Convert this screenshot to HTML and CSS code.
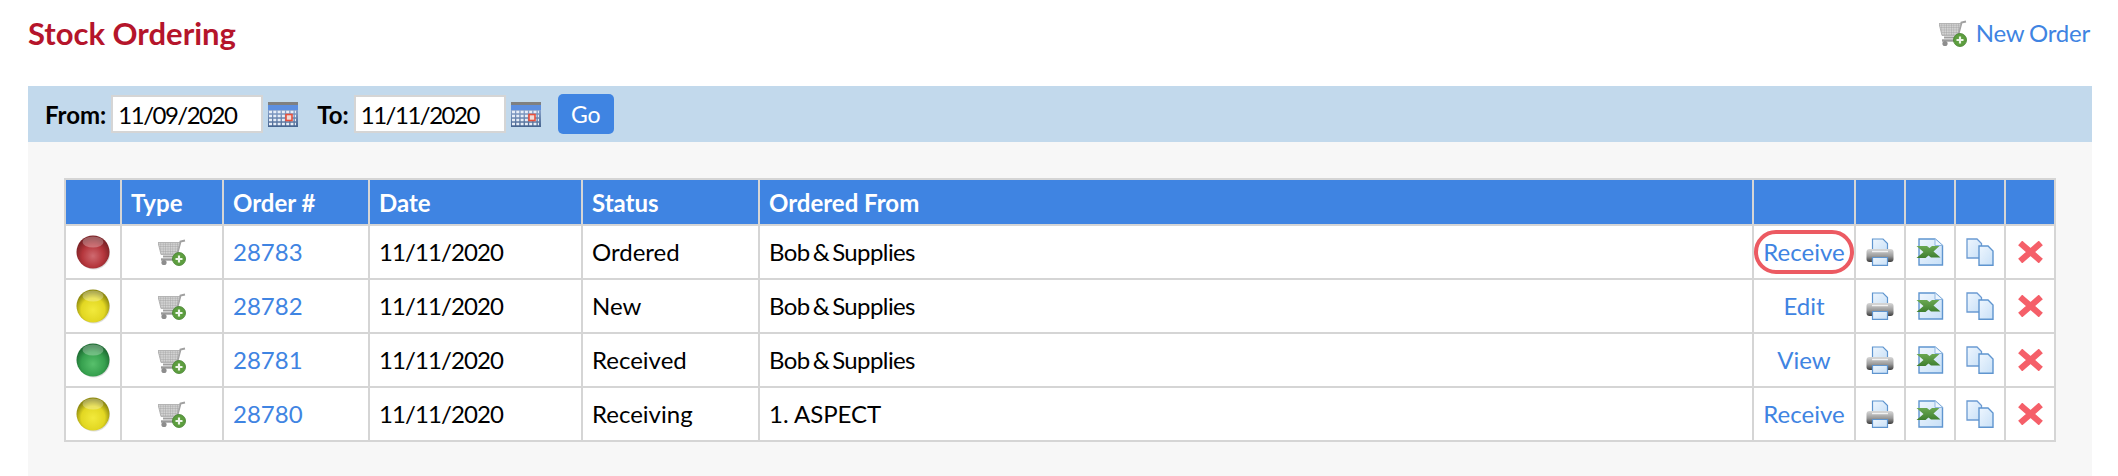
FILE: index.html
```html
<!DOCTYPE html>
<html lang="en">
<head>
  <meta charset="utf-8">
  <title>Stock Ordering</title>
  <link rel="stylesheet" href="styles.css">
</head>
<body>
  <!-- Shared icons -->
  <svg class="icon-defs" width="0" height="0">
    <defs>
      <pattern id="mesh" width="2.4" height="2.4" patternUnits="userSpaceOnUse">
        <rect width="2.4" height="2.4" fill="#d2d2d2"/>
        <path d="M0 0H2.4M0 0V2.4" stroke="#9c9c9c" stroke-width=".7"/>
      </pattern>
      <linearGradient id="printer-body" x1="0" y1="0" x2="0" y2="1">
        <stop offset="0" stop-color="#d8d8d8"/>
        <stop offset=".55" stop-color="#9a9a9a"/>
        <stop offset="1" stop-color="#3d3d3d"/>
      </linearGradient>
      <linearGradient id="paper" x1="0" y1="0" x2="1" y2="1">
        <stop offset="0" stop-color="#eef6fe"/>
        <stop offset="1" stop-color="#c8e0f7"/>
      </linearGradient>
      <linearGradient id="cal-grid" x1="0" y1="0" x2="0" y2="1">
        <stop offset="0" stop-color="#a4bce4"/>
        <stop offset="1" stop-color="#46648f"/>
      </linearGradient>
      <linearGradient id="x-green" x1="0" y1="0" x2="0" y2="1">
        <stop offset="0" stop-color="#6aa852"/>
        <stop offset="1" stop-color="#3f7f30"/>
      </linearGradient>
      <radialGradient id="orb-red" cx=".5" cy=".62" r=".55">
        <stop offset="0" stop-color="#cf6a70"/>
        <stop offset=".6" stop-color="#b5363c"/>
        <stop offset="1" stop-color="#7c2226"/>
      </radialGradient>
      <radialGradient id="orb-yellow" cx=".5" cy=".62" r=".55">
        <stop offset="0" stop-color="#f2ea3c"/>
        <stop offset=".65" stop-color="#e2d722"/>
        <stop offset="1" stop-color="#8f8a10"/>
      </radialGradient>
      <radialGradient id="orb-green" cx=".5" cy=".62" r=".55">
        <stop offset="0" stop-color="#58c06c"/>
        <stop offset=".65" stop-color="#36a04e"/>
        <stop offset="1" stop-color="#1f6e34"/>
      </radialGradient>

      <symbol id="cart" viewBox="0 0 28 27">
        <path d="M27 1.500L22.500 2.500L18.500 17.500H5" fill="none" stroke="#a0a0a0" stroke-width="2"/>
        <path d="M0 3.500H22L18.500 15.500H3Z" fill="url(#mesh)" stroke="#a8a8a8" stroke-width=".8"/>
        <path d="M3 20.500H17" stroke="#9a9a9a" stroke-width="2.400"/>
        <circle cx="6" cy="23.500" r="2.600" fill="#8d8d8d"/>
        <circle cx="21" cy="20" r="6.500" fill="#5d9e3f" stroke="#417f2c" stroke-width=".8"/>
        <path d="M21 16.500V23.500M17.500 20H24.500" stroke="#eef6ea" stroke-width="2.200"/>
      </symbol>

      <symbol id="calendar" viewBox="0 0 30 25">
        <rect x="0" y="1" width="30" height="24" fill="url(#cal-grid)"/>
        <rect x="0" y="0" width="30" height="3" fill="#808080"/>
        <rect x="0" y="3" width="30" height="5" fill="#5d8fe0"/>
        <path d="M1 10H28M1 14H28M1 18H28M1 22H28" stroke="#e6edf7" stroke-width="2.400" stroke-dasharray="3 1.300"/>
        <rect x="18" y="12.500" width="6" height="6" fill="#f0dcd8" stroke="#e8503c" stroke-width="1.600"/>
      </symbol>

      <symbol id="printer" viewBox="0 0 28 28">
        <path d="M6.500 1H17L21.500 5.500V15H6.500Z" fill="url(#paper)" stroke="#5f95cf" stroke-width="1.200"/>
        <rect x="0.500" y="11" width="27" height="13" rx="3" fill="url(#printer-body)"/>
        <path d="M6 13.500H22" stroke="#f2f2f2" stroke-width="1.400"/>
        <path d="M6.500 19.500H21.500V27.300H6.500Z" fill="url(#paper)" stroke="#5f95cf" stroke-width="1.200"/>
      </symbol>

      <symbol id="excel" viewBox="0 0 27 28">
        <path d="M2.500 1H18.500L26 7.500V27H2.500Z" fill="url(#paper)" stroke="#5f95cf" stroke-width="1.400"/>
        <path d="M18.500 1V7.500H26" fill="#eef6fe" stroke="#8fb6e0" stroke-width="1"/>
        <path d="M0 8H10.500L13 10L15.500 8H23L17 13.500L24 19.500H14.500L12 17.500L9 20H0L7 14Z" fill="url(#x-green)"/>
      </symbol>

      <symbol id="copy" viewBox="0 0 28 28">
        <path d="M1 1H11L15.500 5.500V20H1Z" fill="url(#paper)" stroke="#6b9ad2" stroke-width="1.300"/>
        <path d="M13 8H22L27 13V27.300H13Z" fill="url(#paper)" stroke="#5f95cf" stroke-width="1.400"/>
      </symbol>

      <symbol id="delete" viewBox="0 0 25 22">
        <path d="M4.500 4L20.500 18M20.500 4L4.500 18" stroke="#f55f69" stroke-width="6.200" stroke-linecap="square" fill="none"/>
      </symbol>
    </defs>
  </svg>

  <!-- Page heading -->
  <div class="page-head">
    <h1 class="page-title">Stock Ordering</h1>
    <a class="new-order" href="#">
      <svg class="icon icon-cart"><use href="#cart"/></svg>
      New Order
    </a>
  </div>

  <!-- Date filter -->
  <form class="filter-bar">
    <label class="filter-label" for="date-from">From:</label>
    <input class="date-input" id="date-from" type="text" value="11/09/2020">
    <svg class="icon icon-calendar"><use href="#calendar"/></svg>
    <label class="filter-label filter-label-to" for="date-to">To:</label>
    <input class="date-input" id="date-to" type="text" value="11/11/2020">
    <svg class="icon icon-calendar"><use href="#calendar"/></svg>
    <button class="go-btn" type="button">Go</button>
  </form>

  <!-- Orders -->
  <div class="panel">
    <table class="orders">
      <colgroup>
        <col class="col-light">
        <col class="col-type">
        <col class="col-order">
        <col class="col-date">
        <col class="col-status">
        <col class="col-from">
        <col class="col-action">
        <col class="col-tool">
        <col class="col-tool">
        <col class="col-tool">
        <col class="col-tool">
      </colgroup>
      <thead>
        <tr>
          <th></th>
          <th>Type</th>
          <th>Order #</th>
          <th>Date</th>
          <th>Status</th>
          <th>Ordered From</th>
          <th></th>
          <th></th>
          <th></th>
          <th></th>
          <th></th>
        </tr>
      </thead>
      <tbody>
        <tr>
          <td class="cell-icon"><svg class="orb" viewBox="0 0 34 35"><ellipse cx="18" cy="18.500" rx="16" ry="16" fill="#bdbdbd" opacity=".5"/><circle cx="17" cy="17" r="16.500" fill="url(#orb-red)"/><ellipse cx="17" cy="7" rx="10.500" ry="5.500" fill="#fff" opacity=".28"/></svg></td>
          <td class="cell-icon"><svg class="icon icon-cart"><use href="#cart"/></svg></td>
          <td><a href="#">28783</a></td>
          <td class="cell-date">11/11/2020</td>
          <td>Ordered</td>
          <td class="cell-vendor">Bob &amp; Supplies</td>
          <td class="cell-action"><a class="action-link highlighted" href="#">Receive</a></td>
          <td class="cell-icon"><svg class="icon icon-tool"><use href="#printer"/></svg></td>
          <td class="cell-icon"><svg class="icon icon-tool"><use href="#excel"/></svg></td>
          <td class="cell-icon"><svg class="icon icon-tool"><use href="#copy"/></svg></td>
          <td class="cell-icon"><svg class="icon icon-delete"><use href="#delete"/></svg></td>
        </tr>
        <tr>
          <td class="cell-icon"><svg class="orb" viewBox="0 0 34 35"><ellipse cx="18" cy="18.500" rx="16" ry="16" fill="#bdbdbd" opacity=".5"/><circle cx="17" cy="17" r="16.500" fill="url(#orb-yellow)"/><ellipse cx="17" cy="7" rx="10.500" ry="5.500" fill="#fff" opacity=".28"/></svg></td>
          <td class="cell-icon"><svg class="icon icon-cart"><use href="#cart"/></svg></td>
          <td><a href="#">28782</a></td>
          <td class="cell-date">11/11/2020</td>
          <td>New</td>
          <td class="cell-vendor">Bob &amp; Supplies</td>
          <td class="cell-action"><a class="action-link" href="#">Edit</a></td>
          <td class="cell-icon"><svg class="icon icon-tool"><use href="#printer"/></svg></td>
          <td class="cell-icon"><svg class="icon icon-tool"><use href="#excel"/></svg></td>
          <td class="cell-icon"><svg class="icon icon-tool"><use href="#copy"/></svg></td>
          <td class="cell-icon"><svg class="icon icon-delete"><use href="#delete"/></svg></td>
        </tr>
        <tr>
          <td class="cell-icon"><svg class="orb" viewBox="0 0 34 35"><ellipse cx="18" cy="18.500" rx="16" ry="16" fill="#bdbdbd" opacity=".5"/><circle cx="17" cy="17" r="16.500" fill="url(#orb-green)"/><ellipse cx="17" cy="7" rx="10.500" ry="5.500" fill="#fff" opacity=".28"/></svg></td>
          <td class="cell-icon"><svg class="icon icon-cart"><use href="#cart"/></svg></td>
          <td><a href="#">28781</a></td>
          <td class="cell-date">11/11/2020</td>
          <td>Received</td>
          <td class="cell-vendor">Bob &amp; Supplies</td>
          <td class="cell-action"><a class="action-link" href="#">View</a></td>
          <td class="cell-icon"><svg class="icon icon-tool"><use href="#printer"/></svg></td>
          <td class="cell-icon"><svg class="icon icon-tool"><use href="#excel"/></svg></td>
          <td class="cell-icon"><svg class="icon icon-tool"><use href="#copy"/></svg></td>
          <td class="cell-icon"><svg class="icon icon-delete"><use href="#delete"/></svg></td>
        </tr>
        <tr>
          <td class="cell-icon"><svg class="orb" viewBox="0 0 34 35"><ellipse cx="18" cy="18.500" rx="16" ry="16" fill="#bdbdbd" opacity=".5"/><circle cx="17" cy="17" r="16.500" fill="url(#orb-yellow)"/><ellipse cx="17" cy="7" rx="10.500" ry="5.500" fill="#fff" opacity=".28"/></svg></td>
          <td class="cell-icon"><svg class="icon icon-cart"><use href="#cart"/></svg></td>
          <td><a href="#">28780</a></td>
          <td class="cell-date">11/11/2020</td>
          <td>Receiving</td>
          <td>1. ASPECT</td>
          <td class="cell-action"><a class="action-link" href="#">Receive</a></td>
          <td class="cell-icon"><svg class="icon icon-tool"><use href="#printer"/></svg></td>
          <td class="cell-icon"><svg class="icon icon-tool"><use href="#excel"/></svg></td>
          <td class="cell-icon"><svg class="icon icon-tool"><use href="#copy"/></svg></td>
          <td class="cell-icon"><svg class="icon icon-delete"><use href="#delete"/></svg></td>
        </tr>
      </tbody>
    </table>
  </div>
</body>
</html>
```

FILE: styles.css
```css
* {
  margin: 0;
  padding: 0;
  box-sizing: border-box;
}

html, body {
  height: 100%;
  overflow: hidden;
}

body {
  display: flex;
  flex-direction: column;
  padding: 0 26px 0 28px;
  font-family: Lato, 'Open Sans', sans-serif;
  font-size: 24px;
  color: #000;
  background: #fff;
}

a {
  color: #3f84e2;
  text-decoration: none;
}

.icon-defs {
  position: absolute;
}

.icon {
  display: block;
  flex: none;
  filter: blur(0.3px);
}

.icon-cart {
  width: 28px;
  height: 27px;
}

.icon-calendar {
  width: 30px;
  height: 25px;
}

.icon-tool {
  width: 28px;
  height: 28px;
}

.icon-delete {
  width: 25px;
  height: 22px;
}

.page-head {
  height: 86px;
  display: flex;
  justify-content: space-between;
  align-items: flex-start;
  padding-top: 15px;
}

.page-title {
  font-size: 31px;
  font-weight: 700;
  line-height: 36px;
  color: #b5152b;
}

.new-order {
  display: flex;
  align-items: center;
  gap: 9px;
  padding-top: 3px;
  padding-right: 2px;
  line-height: 30px;
  letter-spacing: -0.2px;
  word-spacing: -1px;
}

.filter-bar {
  height: 56px;
  display: flex;
  align-items: center;
  padding-left: 17px;
  background: #c2d9ec;
}

.filter-label {
  font-weight: 700;
  margin-right: 5px;
}

.filter-label-to {
  margin-left: 19px;
}

.date-input {
  width: 152px;
  height: 38px;
  margin-right: 5px;
  padding-left: 5px;
  border: 2px solid #d5d5d5;
  font-family: inherit;
  font-size: 24px;
  letter-spacing: -1.5px;
  color: #000;
  background: #fff;
}

.go-btn {
  width: 56px;
  height: 40px;
  margin-left: 17px;
  border: 0;
  border-radius: 5px;
  font-family: inherit;
  font-size: 23px;
  color: #fff;
  background: #3f84e2;
}

.panel {
  flex: 1;
  padding: 36px 0 0 36px;
  background: #f7f7f7;
}

.orders {
  width: 1992px;
  table-layout: fixed;
  border-collapse: collapse;
  background: #fff;
}

.col-light { width: 56px; }
.col-type { width: 102px; }
.col-order { width: 146px; }
.col-date { width: 213px; }
.col-status { width: 177px; }
.col-from { width: 994px; }
.col-action { width: 102px; }
.col-tool { width: 50px; }

.orders th,
.orders td {
  border: 2px solid #d5d5d5;
  padding: 0 9px;
  text-align: left;
}

.orders th {
  height: 46px;
  font-weight: 700;
  color: #fff;
  background: #3f84e2;
}

.orders td {
  height: 54px;
  padding-bottom: 2px;
  white-space: nowrap;
}

.orders td.cell-date {
  letter-spacing: -0.9px;
}

.orders td.cell-vendor {
  letter-spacing: -0.6px;
  word-spacing: -2.5px;
}

.orders td.cell-icon,
.orders td.cell-action {
  padding: 0;
}

.cell-icon .icon {
  margin: 0 auto;
}

.orb {
  display: block;
  width: 34px;
  height: 35px;
  margin: 0 auto;
  filter: blur(0.3px);
}

.orders td.cell-action {
  text-align: center;
}

.action-link {
  display: inline-block;
  line-height: 30px;
}

.action-link.highlighted {
  width: 100px;
  height: 44px;
  line-height: 36px;
  border: 4px solid #ec5a62;
  border-radius: 22px;
  vertical-align: middle;
}
```
